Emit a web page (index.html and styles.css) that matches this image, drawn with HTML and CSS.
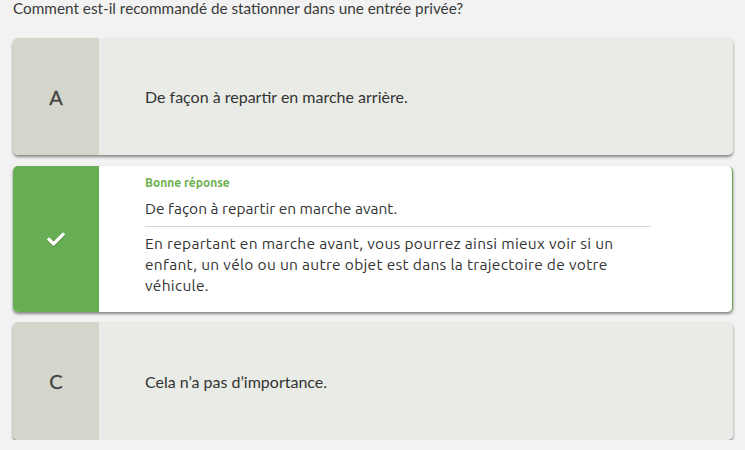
FILE: index.html
```html
<!DOCTYPE html>
<html lang="fr">
<head>
<meta charset="utf-8">
<link rel="stylesheet" href="styles.css">
</head>
<body>
<div class="page">
  <p class="question">Comment est-il recommandé de stationner dans une entrée privée?</p>
  <div class="answers">
    <div class="card card-a">
      <div class="letter">A</div>
      <div class="body"><p class="text">De façon à repartir en marche arrière.</p></div>
    </div>
    <div class="card card-correct">
      <div class="letter letter-ok">
        <svg width="18" height="14" viewBox="0 0 18 14" class="check"><path d="M2 7.5 L6.5 12 L16 2.5" fill="none" stroke="#fff" stroke-width="3.2" stroke-linecap="square"/></svg>
      </div>
      <div class="body body-ok">
        <div class="label">Bonne réponse</div>
        <p class="text-ok">De façon à repartir en marche avant.</p>
        <hr class="sep">
        <p class="explain">En repartant en marche avant, vous pourrez ainsi mieux voir si un enfant, un vélo ou un autre objet est dans la trajectoire de votre véhicule.</p>
      </div>
    </div>
    <div class="card card-c">
      <div class="letter">C</div>
      <div class="body"><p class="text">Cela n’a pas d’importance.</p></div>
    </div>
  </div>
</div>
</body>
</html>
```
FILE: styles.css
```css
html, body {
  margin: 0;
  padding: 0;
  background: #f2f2f2;
}
.page {
  padding: 0 12px 0 13px;
  font-family: Lato, "Liberation Sans", sans-serif;
  color: #333;
}
.question {
  margin: 0;
  font-size: 15.3px;
  line-height: 17px;
  color: #3a3a3a;
}
.answers {
  margin-top: 21px;
  display: flex;
  flex-direction: column;
  gap: 10px;
}
.card {
  display: flex;
  border-radius: 5px;
  overflow: hidden;
  background: #e9ebe6;
  box-shadow: 0 2px 3px rgba(0, 0, 0, 0.45);
}
.card-a { height: 117px; }
.card-c { height: 118px; }
.card-correct {
  height: 146px;
  background: #fff;
  border-right: 1px solid #66ad53;
  margin-top: 1px;
}
.letter {
  width: 86px;
  flex: none;
  background: #d4d6cc;
  display: flex;
  align-items: center;
  justify-content: center;
  font-size: 20px;
  color: #444;
  -webkit-text-stroke: 0.3px #444;
}
.letter-ok {
  background: #66ad53;
}
.check {
  filter: drop-shadow(0 1px 0 rgba(0,0,0,0.25));
}
.body {
  flex: 1;
  display: flex;
  align-items: center;
  padding-left: 46px;
}
.text {
  margin: 0;
  font-size: 16px;
  color: #333;
}
.body-ok {
  flex-direction: column;
  align-items: flex-start;
  justify-content: flex-start;
  padding: 10px 0 0 46px;
  font-family: Ubuntu, "Noto Sans", sans-serif;
  width: 506px;
  flex: none;
}
.label {
  font-size: 12px;
  font-weight: bold;
  color: #6cb14f;
  line-height: 14px;
}
.text-ok {
  margin: 9px 0 0;
  font-size: 15.5px;
  line-height: 20px;
  color: #333;
}
.sep {
  width: 506px;
  margin: 7px 0 6px;
  border: 0;
  border-top: 1px solid #d6d6cc;
}
.explain {
  margin: 0;
  max-width: 475px;
  font-size: 15.5px;
  letter-spacing: 0.3px;
  line-height: 21px;
  color: #333;
}
```
